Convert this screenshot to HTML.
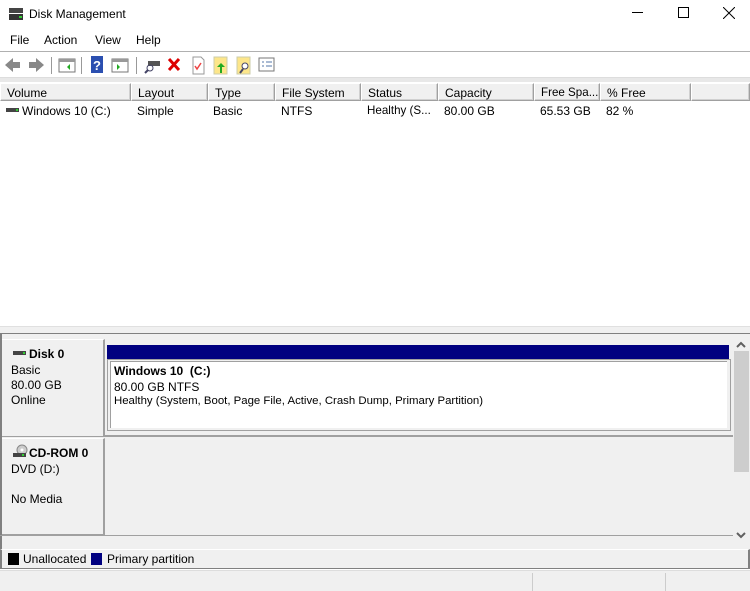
<!DOCTYPE html><html><head><style>
*{margin:0;padding:0;box-sizing:border-box}
body{width:750px;height:591px;overflow:hidden;background:#fff;font-family:"Liberation Sans",sans-serif;font-size:12px;color:#000;position:relative}
.a{position:absolute;white-space:nowrap}
.hd{position:absolute;top:83px;height:18px;background:#f0f0f0;border:1px solid #a0a0a0;border-top-color:#fff;border-left-color:#fff;padding:2px 0 0 6px;box-shadow:inset -1px -1px 0 #d0d0d0;white-space:nowrap;overflow:hidden}
.s{font-size:11.6px}
</style></head><body>
<svg class="a" style="left:8px;top:7px" width="16" height="14"><rect x="1" y="1" width="14" height="5" fill="#444"/><rect x="1" y="7" width="14" height="6" fill="#333"/><rect x="11" y="9" width="3" height="2" fill="#3c3"/></svg>
<div class="a" style="left:29px;top:7px;font-size:12px">Disk Management</div>
<div class="a" style="left:632px;top:12px;width:11px;height:1px;background:#000"></div>
<div class="a" style="left:678px;top:7px;width:11px;height:11px;border:1px solid #000"></div>
<svg class="a" style="left:723px;top:7px" width="12" height="12"><path d="M0 0L12 12M12 0L0 12" stroke="#000"/></svg>
<div class="a" style="left:10px;top:33px">File</div>
<div class="a" style="left:44px;top:33px">Action</div>
<div class="a" style="left:95px;top:33px">View</div>
<div class="a" style="left:136px;top:33px">Help</div>
<div class="a" style="left:0;top:51px;width:750px;height:1px;background:#b0b0b0"></div>
<svg class="a" style="left:0;top:54px" width="280" height="22">
<path d="M5 11l8-7v4h7v6h-7v4z" fill="#888"/><path d="M44 11l-8-7v4h-7v6h7v4z" fill="#888"/>
<rect x="51" y="3" width="1" height="17" fill="#999"/>
<rect x="59" y="5" width="16" height="13" fill="#fff" stroke="#777"/><rect x="59" y="5" width="16" height="3" fill="#999"/><path d="M70 10v6l-3-3z" fill="#2a2"/>
<rect x="81" y="3" width="1" height="17" fill="#999"/>
<rect x="91" y="2" width="12" height="17" fill="#2b4fb0"/><text x="93" y="16" fill="#fff" font-size="13" font-weight="bold" font-family="Liberation Sans">?</text>
<rect x="112" y="5" width="16" height="13" fill="#fff" stroke="#777"/><rect x="112" y="5" width="16" height="3" fill="#999"/><path d="M117 10v6l3-3z" fill="#2a2"/>
<rect x="136" y="3" width="1" height="17" fill="#999"/>
<rect x="148" y="7" width="12" height="5" fill="#555"/><circle cx="150" cy="14" r="3" fill="none" stroke="#446"/><path d="M148 16l-3 3" stroke="#446" stroke-width="2"/>
<path d="M169 5l10 11M179 5l-10 11" stroke="#d00" stroke-width="3"/>
<path d="M193 3h8l3 3v14h-11z" fill="#fff" stroke="#999"/><path d="M195 12l2 3 4-6" stroke="#e44" fill="none" stroke-width="1.5"/>
<rect x="214" y="3" width="13" height="17" fill="#fde68a" stroke="#cca"/><path d="M220 19v-6h-3l4-4 4 4h-3v6z" fill="#2a2"/>
<rect x="237" y="3" width="13" height="17" fill="#fde68a" stroke="#cca"/><circle cx="245" cy="12" r="3" fill="#fff" stroke="#446"/><path d="M243 15l-3 4" stroke="#446" stroke-width="2"/>
<rect x="259" y="4" width="15" height="13" fill="#fff" stroke="#777"/><path d="M262 8h2M262 12h2M266 8h6M266 12h6" stroke="#57a"/>
</svg>
<div class="a" style="left:0;top:77px;width:750px;height:5px;background:#e8e8e8;border-top:1px solid #ddd"></div>
<div class="hd" style="left:0;width:131px">Volume</div>
<div class="hd" style="left:131px;width:77px">Layout</div>
<div class="hd" style="left:208px;width:67px">Type</div>
<div class="hd" style="left:275px;width:86px">File System</div>
<div class="hd" style="left:361px;width:77px">Status</div>
<div class="hd" style="left:438px;width:96px">Capacity</div>
<div class="hd s" style="left:534px;width:66px">Free Spa...</div>
<div class="hd" style="left:600px;width:91px">% Free</div>
<div class="hd" style="left:691px;width:59px"></div>
<div class="a" style="left:6px;top:108px;width:13px;height:4px;background:#444"></div>
<div class="a" style="left:16px;top:109px;width:2px;height:2px;background:#3c3"></div>
<div class="a" style="left:22px;top:104px">Windows 10 (C:)</div>
<div class="a" style="left:137px;top:104px">Simple</div>
<div class="a" style="left:213px;top:104px">Basic</div>
<div class="a" style="left:281px;top:104px">NTFS</div>
<div class="a s" style="left:367px;top:104px">Healthy (S...</div>
<div class="a" style="left:444px;top:104px">80.00 GB</div>
<div class="a" style="left:540px;top:104px">65.53 GB</div>
<div class="a" style="left:606px;top:104px">82 %</div>
<div class="a" style="left:0;top:326px;width:750px;height:8px;background:#f0f0f0;border-top:1px solid #e0e0e0;border-bottom:1px solid #808080"></div>
<div class="a" style="left:0;top:334px;width:733px;height:215px;background:#f0f0f0;border-left:2px solid #808080"></div>
<div class="a" style="left:2px;top:339px;width:103px;height:98px;background:#f0f0f0;border-right:2px solid #a0a0a0;border-bottom:1px solid #a0a0a0;border-top:1px solid #fff"></div>
<div class="a" style="left:13px;top:351px;width:13px;height:4px;background:#444"></div>
<div class="a" style="left:23px;top:352px;width:2px;height:2px;background:#3c3"></div>
<div class="a" style="left:29px;top:347px;font-weight:bold">Disk 0</div>
<div class="a" style="left:11px;top:363px">Basic</div>
<div class="a" style="left:11px;top:378px">80.00 GB</div>
<div class="a" style="left:11px;top:393px">Online</div>
<div class="a" style="left:105px;top:339px;width:628px;height:98px;border-bottom:2px solid #a0a0a0"></div>
<div class="a" style="left:107px;top:345px;width:622px;height:14px;background:#000080"></div>
<div class="a" style="left:107px;top:359px;width:624px;height:72px;background:#f0f0f0;border:1px solid #a0a0a0"></div>
<div class="a" style="left:110px;top:361px;width:617px;height:67px;background:#fff;border-top:1px solid #a0a0a0;border-left:1px solid #a0a0a0"></div>
<div class="a" style="left:114px;top:364px;font-weight:bold">Windows 10&nbsp; (C:)</div>
<div class="a" style="left:114px;top:380px">80.00 GB NTFS</div>
<div class="a s" style="left:114px;top:395px;font-size:11.4px">Healthy (System, Boot, Page File, Active, Crash Dump, Primary Partition)</div>
<div class="a" style="left:2px;top:438px;width:103px;height:98px;border-right:2px solid #a0a0a0;border-bottom:2px solid #a0a0a0;border-top:1px solid #fff"></div>
<svg class="a" style="left:12px;top:444px" width="16" height="14"><circle cx="10" cy="6" r="5" fill="#ccc" stroke="#888"/><circle cx="10" cy="6" r="1.5" fill="#fff"/><rect x="1" y="9" width="13" height="4" fill="#444"/><rect x="10" y="10" width="2" height="2" fill="#3c3"/></svg>
<div class="a" style="left:29px;top:446px;font-weight:bold">CD-ROM 0</div>
<div class="a" style="left:11px;top:462px">DVD (D:)</div>
<div class="a" style="left:11px;top:492px">No Media</div>
<div class="a" style="left:0;top:535px;width:733px;height:1px;background:#a0a0a0"></div>
<div class="a" style="left:733px;top:334px;width:17px;height:215px;background:#f0f0f0"></div>
<div class="a" style="left:734px;top:351px;width:15px;height:121px;background:#cdcdcd"></div>
<svg class="a" style="left:735px;top:340px" width="12" height="200"><path d="M2 7l4-4 4 4" stroke="#606060" stroke-width="2" fill="none"/><path d="M2 193l4 4 4-4" stroke="#606060" stroke-width="2" fill="none"/></svg>
<div class="a" style="left:0;top:549px;width:750px;height:20px;background:#f0f0f0;border-left:2px solid #808080;border-top:1px solid #fff;border-bottom:1px solid #808080;border-right:2px solid #808080"></div>
<div class="a" style="left:8px;top:553px;width:11px;height:12px;background:#000"></div>
<div class="a" style="left:23px;top:552px">Unallocated</div>
<div class="a" style="left:91px;top:553px;width:11px;height:12px;background:#000080"></div>
<div class="a" style="left:107px;top:552px">Primary partition</div>
<div class="a" style="left:0;top:570px;width:750px;height:21px;background:#f0f0f0;border-top:1px solid #ddd"></div>
<div class="a" style="left:532px;top:573px;width:1px;height:18px;background:#ccc"></div>
<div class="a" style="left:665px;top:573px;width:1px;height:18px;background:#ccc"></div>
</body></html>
